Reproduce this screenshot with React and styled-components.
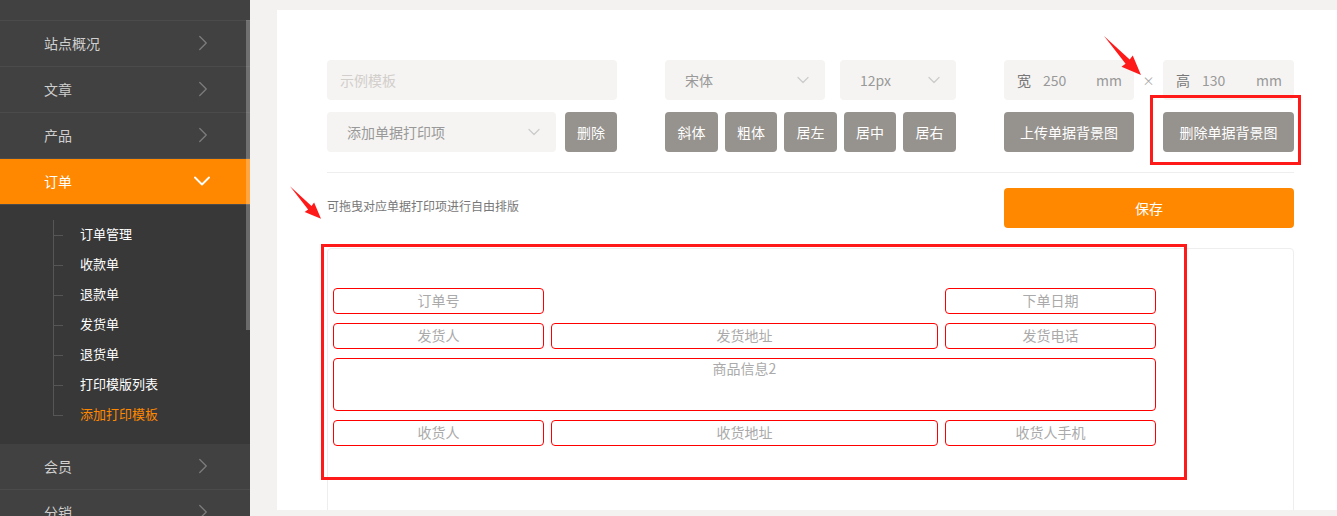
import React from 'react';
import styled, { createGlobalStyle } from 'styled-components';
import { ChevronRight, ChevronDown } from 'lucide-react';

const GlobalStyle = createGlobalStyle`
  html, body {
    margin: 0;
    padding: 0;
    background: #f3f2f0;
    font-family: "Noto Sans CJK SC", "Noto Sans", sans-serif;
  }
  * { box-sizing: border-box; }
`;

// Layout
const Page = styled.div`
  display: flex;
  width: 1337px;
  height: 516px;
  overflow: hidden;
`;

const Sidebar = styled.aside`
  position: relative;
  width: 250px;
  flex-shrink: 0;
  background: #414141;
`;

const Scrollbar = styled.div`
  position: absolute;
  right: 0;
  top: 20px;
  width: 4px;
  height: 310px;
  background: rgba(255, 255, 255, 0.25);
`;

const MenuItem = styled.div`
  display: flex;
  align-items: center;
  justify-content: space-between;
  height: ${(p) => (p.$stub ? '21px' : '46px')};
  padding: 0 34px 2px 44px;
  border-bottom: 1px solid #4b4b4b;
  background: ${(p) => (p.$active ? '#ff8800' : '#414141')};
  color: ${(p) => (p.$active ? '#ffffff' : '#cfcfcf')};
  font-size: 14px;
  svg { color: ${(p) => (p.$active ? '#ffffff' : '#7c7c7c')}; }
`;

const SubMenu = styled.div`
  background: #373837;
  padding: 15px 0 14px 53px;
`;

const SubItem = styled.div`
  position: relative;
  height: 30px;
  line-height: 28px;
  padding-left: 27px;
  font-size: 13px;
  color: ${(p) => (p.$active ? '#ff8800' : '#ffffff')};

  &::before {
    content: '';
    position: absolute;
    left: 0;
    top: 0;
    height: ${(p) => (p.$last ? '50%' : '100%')};
    border-left: 1px solid #555655;
  }
  &::after {
    content: '';
    position: absolute;
    left: 0;
    top: 50%;
    width: 10px;
    border-top: 1px solid #555655;
  }
`;

const Main = styled.main`
  flex: 1;
  padding: 10px 0 0 27px;
`;

const Card = styled.section`
  position: relative;
  height: 500px;
  background: #ffffff;
  padding: 50px 43px 0 50px;
  overflow: hidden;
`;

const Toolbar = styled.div`
  display: grid;
  grid-template-columns: 290px 291px 290px;
  column-gap: 48px;
  row-gap: 12px;
`;

const Cell = styled.div`
  display: flex;
  align-items: center;
  gap: ${(p) => p.$gap || '0px'};
`;

const Field = styled.div`
  display: flex;
  align-items: center;
  justify-content: space-between;
  width: ${(p) => p.$w};
  height: 40px;
  padding: 0 ${(p) => p.$pr || '12px'} 0 ${(p) => p.$pl || '20px'};
  background: #f5f4f2;
  border-radius: 4px;
  font-size: 14px;
  color: ${(p) => p.$color || '#999'};
  svg { color: #cccccc; }
`;

const Times = styled.span`
  width: 29px;
  text-align: center;
  font-size: 12px;
  color: #aaa;
`;

const Label = styled.span`
  color: #777;
  margin-right: 12px;
`;

const Value = styled.span`
  flex: 1;
  color: #999;
`;

const Unit = styled.span`
  color: #999;
`;

const GrayButton = styled.button`
  width: ${(p) => p.$w};
  height: 40px;
  border: none;
  border-radius: 4px;
  background: #96928d;
  color: #ffffff;
  font-family: inherit;
  font-size: 14px;
  padding: 0;
`;

const Divider = styled.div`
  height: 1px;
  background: #eeeeee;
  margin: 20px 0 15px;
  width: 967px;
`;

const SaveRow = styled.div`
  display: grid;
  grid-template-columns: 629px 290px;
  column-gap: 48px;
  align-items: center;
`;

const Hint = styled.div`
  font-size: 12px;
  color: #777;
  padding-bottom: 6px;
`;

const SaveButton = styled.button`
  height: 40px;
  border: none;
  border-radius: 4px;
  background: #ff8800;
  color: #ffffff;
  font-family: inherit;
  font-size: 14px;
`;

const Canvas = styled.div`
  position: relative;
  width: 967px;
  height: 300px;
  margin-top: 20px;
  border: 1px solid #eeeeee;
  border-radius: 4px;
`;

const PrintItem = styled.div`
  position: absolute;
  display: flex;
  justify-content: center;
  align-items: ${(p) => (p.$tall ? 'flex-start' : 'center')};
  padding-bottom: ${(p) => (p.$tall ? '0' : '3px')};
  border: 1px solid #ff0000;
  border-radius: 4px;
  font-size: 14px;
  line-height: 18px;
  color: #aaaaaa;
`;

const Mark = styled.div`
  position: absolute;
  border: 3px solid #ff1a1a;
  pointer-events: none;
`;

const Arrow = styled.svg`
  position: absolute;
  pointer-events: none;
`;

const menuTop = ['站点概况', '文章', '产品'];
const subItems = ['订单管理', '收款单', '退款单', '发货单', '退货单', '打印模版列表', '添加打印模板'];

const printItems = [
  { t: '订单号', x: 5, y: 39, w: 211, h: 26 },
  { t: '下单日期', x: 617, y: 39, w: 211, h: 26 },
  { t: '发货人', x: 5, y: 74, w: 211, h: 26 },
  { t: '发货地址', x: 223, y: 74, w: 387, h: 26 },
  { t: '发货电话', x: 617, y: 74, w: 211, h: 26 },
  { t: '商品信息2', x: 5, y: 109, w: 823, h: 53, tall: true },
  { t: '收货人', x: 5, y: 171, w: 211, h: 26 },
  { t: '收货地址', x: 223, y: 171, w: 387, h: 26 },
  { t: '收货人手机', x: 617, y: 171, w: 211, h: 26 },
];

const RedArrow = ({ left, top, w, h }) => (
  <Arrow style={{ left, top }} width={w} height={h} viewBox="0 0 36 38">
    <polygon points="0,0 25,23 28,19 36,38 17,30 21,27" fill="#ff1a1a" />
  </Arrow>
);

const App = () => {
  return (
    <Page>
      <GlobalStyle />
      <Sidebar>
        <MenuItem $stub />
        {menuTop.map((m) => (
          <MenuItem key={m}>
            {m}
            <ChevronRight size={26} strokeWidth={1.2} />
          </MenuItem>
        ))}
        <MenuItem $active>
          订单
          <ChevronDown size={28} strokeWidth={1.6} />
        </MenuItem>
        <SubMenu>
          {subItems.map((s, i) => (
            <SubItem key={s} $last={i === subItems.length - 1} $active={i === subItems.length - 1}>
              {s}
            </SubItem>
          ))}
        </SubMenu>
        <MenuItem>
          会员
          <ChevronRight size={26} strokeWidth={1.2} />
        </MenuItem>
        <MenuItem>
          分销
          <ChevronRight size={26} strokeWidth={1.2} />
        </MenuItem>
        <Scrollbar />
      </Sidebar>

      <Main>
        <Card>
          <Toolbar>
            <Cell>
              <Field $w="290px" $pl="13px" $color="#d2cecb">示例模板</Field>
            </Cell>
            <Cell $gap="15px">
              <Field $w="160px">
                宋体
                <ChevronDown size={20} strokeWidth={1.5} />
              </Field>
              <Field $w="116px">
                12px
                <ChevronDown size={20} strokeWidth={1.5} />
              </Field>
            </Cell>
            <Cell>
              <Field $w="130px" $pl="13px" $color="#999">
                <Label>宽</Label>
                <Value>250</Value>
                <Unit>mm</Unit>
              </Field>
              <Times>×</Times>
              <Field $w="131px" $pl="13px" $color="#999">
                <Label>高</Label>
                <Value>130</Value>
                <Unit>mm</Unit>
              </Field>
            </Cell>

            <Cell $gap="9px">
              <Field $w="229px">
                添加单据打印项
                <ChevronDown size={20} strokeWidth={1.5} />
              </Field>
              <GrayButton $w="52px">删除</GrayButton>
            </Cell>
            <Cell $gap="7px">
              <GrayButton $w="53px">斜体</GrayButton>
              <GrayButton $w="52px">粗体</GrayButton>
              <GrayButton $w="53px">居左</GrayButton>
              <GrayButton $w="52px">居中</GrayButton>
              <GrayButton $w="53px">居右</GrayButton>
            </Cell>
            <Cell $gap="29px">
              <GrayButton $w="130px">上传单据背景图</GrayButton>
              <GrayButton $w="131px">删除单据背景图</GrayButton>
            </Cell>
          </Toolbar>

          <Divider />

          <SaveRow>
            <Hint>可拖曳对应单据打印项进行自由排版</Hint>
            <SaveButton>保存</SaveButton>
          </SaveRow>

          <Canvas>
            {printItems.map((it) => (
              <PrintItem
                key={it.t}
                $tall={it.tall}
                style={{ left: it.x, top: it.y, width: it.w, height: it.h }}
              >
                {it.t}
              </PrintItem>
            ))}
            <Mark style={{ left: -7, top: -5, width: 866, height: 236 }} />
          </Canvas>

          <Mark style={{ left: 873, top: 85, width: 151, height: 70 }} />
          <RedArrow left={827} top={26} w={37} h={39} />
          <RedArrow left={13} top={176} w={31} h={33} />
        </Card>
      </Main>
    </Page>
  );
};

export default App;
